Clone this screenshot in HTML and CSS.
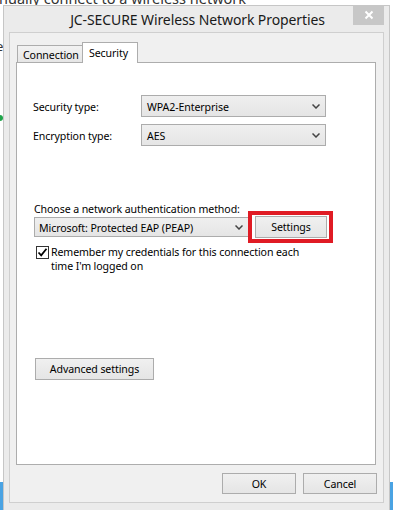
FILE: index.html
```html
<!DOCTYPE html>
<html>
<head>
<meta charset="utf-8">
<link rel="stylesheet" href="styles.css">
</head>
<body>
<div class="backdrop">
  <div class="bg-text">nually connect to a wireless network</div>
  <div class="bg-e">e</div>
  <div class="bg-dot"></div>
  <div class="bg-blue-left"></div>
  <div class="bg-blue-right"></div>
</div>

<div class="dialog">
  <div class="titlebar">
    <span class="title">JC-SECURE Wireless Network Properties</span>
    <span class="close">
      <svg width="10" height="10" viewBox="0 0 10 10"><path d="M1.5 1.5 L8.5 8.5 M8.5 1.5 L1.5 8.5" stroke="#fff" stroke-width="2"/></svg>
    </span>
  </div>
  <div class="client">
    <div class="tabs">
      <div class="tab">Connection</div>
      <div class="tab active">Security</div>
    </div>
    <div class="panel">
      <div class="field-row first">
        <span class="label">Security type:</span>
        <div class="combo wide"><span>WPA2-Enterprise</span><svg class="chev" width="8" height="5" viewBox="0 0 8 5"><path d="M0.5 0.5 L4 4 L7.5 0.5" fill="none" stroke="#444" stroke-width="1.5"/></svg></div>
      </div>
      <div class="field-row">
        <span class="label">Encryption type:</span>
        <div class="combo wide"><span>AES</span><svg class="chev" width="8" height="5" viewBox="0 0 8 5"><path d="M0.5 0.5 L4 4 L7.5 0.5" fill="none" stroke="#444" stroke-width="1.5"/></svg></div>
      </div>

      <div class="auth-label">Choose a network authentication method:</div>
      <div class="auth-row">
        <div class="combo auth"><span>Microsoft: Protected EAP (PEAP)</span><svg class="chev" width="8" height="5" viewBox="0 0 8 5"><path d="M0.5 0.5 L4 4 L7.5 0.5" fill="none" stroke="#444" stroke-width="1.5"/></svg></div>
        <div class="settings-wrap">
          <button class="btn settings">Settings</button>
          <span class="highlight"></span>
        </div>
      </div>

      <div class="check-row">
        <span class="checkbox">
          <svg width="11" height="11" viewBox="0 0 11 11"><path d="M1.5 5.5 L4.2 8.3 L9.5 1.8" fill="none" stroke="#000" stroke-width="1.8"/></svg>
        </span>
        <span class="check-text">Remember my credentials for this connection each time I'm logged on</span>
      </div>

      <button class="btn advanced">Advanced settings</button>
    </div>
    <div class="footer">
      <button class="btn dlg">OK</button>
      <button class="btn dlg">Cancel</button>
    </div>
  </div>
</div>
</body>
</html>
```
FILE: styles.css
```css
* { box-sizing: border-box; }
html, body {
  margin: 0;
  padding: 0;
  width: 393px;
  height: 510px;
  overflow: hidden;
  background: #ffffff;
  font-family: "Noto Sans", "Open Sans", sans-serif;
  color: #000;
}

.backdrop {
  position: relative;
  display: flow-root;
  width: 393px;
  height: 510px;
}
.bg-text {
  font-size: 14.5px;
  line-height: 16px;
  color: #333;
  margin-top: -10px;
  margin-left: -1px;
  white-space: nowrap;
}
.bg-e {
  position: absolute;
  left: -4px;
  top: 37px;
  font-size: 13px;
  color: #333;
}
.bg-dot {
  position: absolute;
  left: -3px;
  top: 115px;
  width: 6px;
  height: 6px;
  border-radius: 50%;
  background: #1fa44a;
}
.bg-blue-left {
  position: absolute;
  left: 0;
  top: 482px;
  width: 3px;
  height: 28px;
  background: #4aa3e3;
}
.bg-blue-right {
  position: absolute;
  left: 390px;
  top: 482px;
  width: 3px;
  height: 28px;
  background: #4aa3e3;
}

.dialog {
  position: absolute;
  left: 3px;
  top: 5px;
  width: 387px;
  height: 515px;
  background: #ebebeb;
  border: 1px solid #c6c6c6;
  padding: 0 5px;
  display: flex;
  flex-direction: column;
}

.titlebar {
  height: 26px;
  display: flex;
  align-items: center;
  justify-content: center;
}
.title {
  font-size: 14px;
  letter-spacing: -0.1px;
  color: #1a1a1a;
  margin-left: 2px;
  margin-top: 1px;
}
.close {
  position: absolute;
  top: -1px;
  right: 5px;
  width: 31px;
  height: 20px;
  background: #c7c7c7;
  display: flex;
  align-items: center;
  justify-content: center;
}

.client {
  width: 375px;
  height: 471px;
  border: 1px solid #cfcfcf;
  background: #f0f0f0;
  padding: 9px 7px 8px 6px;
  display: flex;
  flex-direction: column;
}

.tabs {
  display: flex;
  align-items: flex-end;
  height: 21px;
  margin-left: 1px;
  margin-bottom: -1px;
  position: relative;
  z-index: 1;
  font-size: 10.6px;
  letter-spacing: -0.1px;
}
.tab {
  height: 17px;
  width: 65px;
  margin-bottom: 1px;
  border: 1px solid #adadad;
  border-right: none;
  border-bottom: none;
  background: linear-gradient(#f2f2f2, #e6e6e6);
  display: flex;
  align-items: center;
  padding-left: 5px;
  padding-top: 1px;
}
.tab.active {
  height: 21px;
  width: 56px;
  margin-bottom: 0;
  border-right: 1px solid #adadad;
  background: #fff;
  padding-left: 6px;
  padding-top: 0;
  padding-bottom: 1px;
}

.panel {
  width: 360px;
  height: 403px;
  background: #fff;
  border: 1px solid #adadad;
  padding: 32px 0 0 16px;
  font-size: 10.6px;
  letter-spacing: -0.1px;
  display: flex;
  flex-direction: column;
  align-items: flex-start;
}

.field-row {
  display: flex;
  align-items: center;
  height: 22px;
  margin-top: 7px;
}
.field-row.first { margin-top: 0; }
.label {
  width: 108px;
  padding-top: 1px;
}

.combo {
  height: 22px;
  border: 1px solid #acacac;
  background: linear-gradient(#efefef, #e5e5e5);
  display: flex;
  align-items: center;
  justify-content: space-between;
  padding: 0 4px 0 5px;
}
.combo.wide { width: 185px; }
.combo span { padding-top: 1px; }
.chev { margin-right: 1px; }

.auth-label {
  margin-top: 56px;
  line-height: 15px;
  height: 15px;
  padding-left: 1px;
}
.auth-row {
  display: flex;
  align-items: center;
  margin-top: -1px;
  margin-left: 1px;
  height: 22px;
}
.combo.auth {
  width: 215px;
  height: 20px;
  padding-left: 4px;
}

.settings-wrap {
  position: relative;
  margin-left: 6px;
  display: flex;
}
.highlight {
  position: absolute;
  left: -7px;
  top: -5px;
  right: -6px;
  bottom: -5px;
  border: 4px solid #e01b24;
}

.btn {
  font-family: "Noto Sans", "Open Sans", sans-serif;
  font-size: 10.6px;
  letter-spacing: -0.1px;
  color: #000;
  border: 1px solid #acacac;
  background: linear-gradient(#f0f0f0, #e5e5e5);
  padding: 0;
  margin: 0;
  display: flex;
  align-items: center;
  justify-content: center;
}
.settings {
  width: 72px;
  height: 22px;
}

.check-row {
  display: flex;
  align-items: flex-start;
  margin-top: 7px;
  line-height: 14px;
}
.checkbox {
  width: 13px;
  height: 13px;
  margin-left: 3px;
  margin-top: 1px;
  border: 1px solid #333;
  background: #fff;
  display: flex;
  align-items: center;
  justify-content: center;
}
.check-text {
  width: 262px;
  margin-left: 2px;
}

.advanced {
  margin-top: 85px;
  margin-left: 2px;
  width: 119px;
  height: 22px;
}

.footer {
  display: flex;
  justify-content: flex-end;
  gap: 7px;
  margin-top: 8px;
  margin-right: -1px;
}
.dlg {
  width: 74px;
  height: 21px;
}
```
